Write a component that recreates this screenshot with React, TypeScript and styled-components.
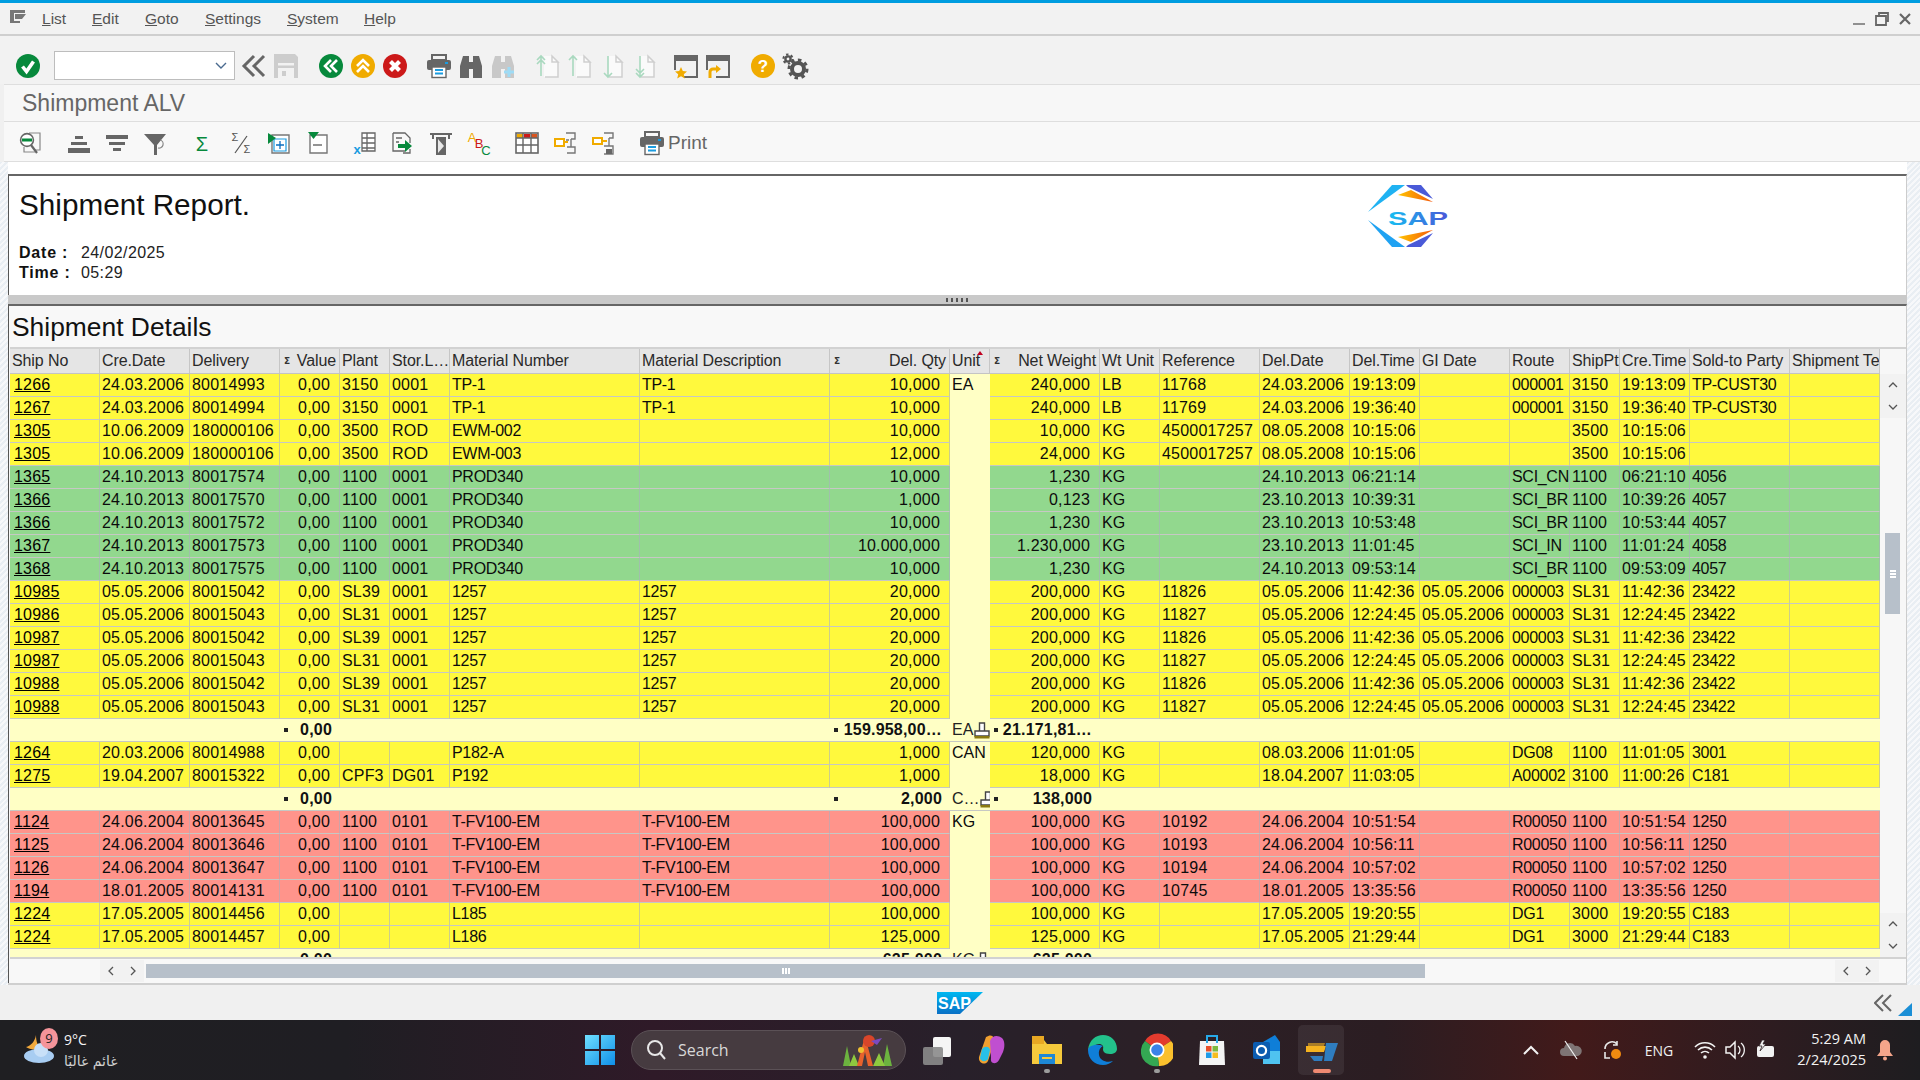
import React from 'react';
import styled, { createGlobalStyle } from 'styled-components';

const Global = createGlobalStyle`
  html, body { margin: 0; padding: 0; background: #f0f0f0; }
  * { box-sizing: border-box; }
  body { font-family: "Liberation Sans", Arial, sans-serif; overflow: hidden; }
`;

const Screen = styled.div`
  width: 1920px; height: 1080px; display: flex; flex-direction: column; overflow: hidden;
`;
const TopLine = styled.div`height: 3px; background: #009de0; flex: none;`;
const MenuBar = styled.div`
  height: 33px; flex: none; background: #f2f2f2; display: flex; align-items: center;
  border-bottom: 2px solid #cfcfcf; padding: 0 0 0 9px; color: #555; font-size: 15.5px;
`;
const MenuIcon = styled.svg`width: 18px; height: 18px; margin: -4px 15px 0 0; flex: none;`;
const MenuItem = styled.span<{ $w: number }>`
  width: ${p => p.$w}px; flex: none;
  &::first-letter { text-decoration: underline; }
`;
const WinControls = styled.div`margin-left: auto; display: flex; gap: 7px; padding-right: 7px; align-items: center;`;
const WinIcon = styled.svg`width: 16px; height: 16px; color: #666;`;

const SysBar = styled.div`
  height: 48px; flex: none; background: #f2f2f2; display: flex; align-items: center; padding: 12px 0 0 12px;
`;
const Tool = styled.span<{ $ml?: number; $w?: number }>`
  width: ${p => p.$w ?? 32}px; margin-left: ${p => p.$ml ?? 0}px; height: 24px; flex: none;
  display: flex; justify-content: center; align-items: center;
`;
const Ico = styled.svg`width: 24px; height: 24px; display: block; overflow: visible;`;
const Combo = styled.div`
  width: 181px; height: 29px; margin: -1px 3px 0 10px; background: #fff; border: 1px solid #bdbdbd; flex: none;
  display: flex; align-items: center; justify-content: flex-end; padding-right: 7px;
`;
const ComboArrow = styled.svg`width: 12px; height: 8px;`;
const TitleBar = styled.div`
  height: 38px; flex: none; margin-left: 4px; background: #f7f7f7; border-top: 1px solid #dedede; border-bottom: 1px solid #dedede;
  padding-left: 18px; color: #666; font-size: 23px; line-height: 36px;
`;
const AppBar = styled.div`
  height: 40px; flex: none; margin-left: 4px; background: #f8f8f8; border-bottom: 1px solid #dedede;
  display: flex; align-items: center; padding: 3px 0 0 8px;
`;
const PrintLabel = styled.span`font-size: 19px; color: #666; margin-left: 0;`;

const Middle = styled.div`flex: 1; display: flex; min-height: 0;`;
const Hatch = styled.div<{ $w: number }>`
  width: ${p => p.$w}px; flex: none;
  background: repeating-linear-gradient(135deg, #e9eef3 0 2px, #f7f8fa 2px 4px);
`;
const Main = styled.div`
  flex: 1; min-width: 0; background: #fff; padding-top: 12px; display: flex; flex-direction: column; border-bottom: 2px solid #cfcfcf;
`;
const Report = styled.div`
  height: 121px; flex: none; border-top: 2px solid #666; border-left: 1px solid #555; border-right: 1px solid #ccc;
  display: flex; background: #fff;
`;
const ReportText = styled.div`flex: 0 0 1359px; padding: 12px 0 0 10px;`;
const ReportTitle = styled.div`font-size: 29.7px; line-height: 34px; color: #111;`;
const InfoLine = styled.div`font-size: 16px; line-height: 20px; display: flex; color: #222; letter-spacing: .4px;`;
const InfoGap = styled.div`height: 21px;`;
const InfoKey = styled.b`width: 62px; color: #111; flex: none; letter-spacing: .8px;`;
const Logo = styled.svg`width: 80px; height: 62px; margin-top: 9px; flex: none;`;
const Splitter = styled.div`height: 9px; flex: none; background: #c9c9c9; display: flex; justify-content: center; align-items: center;`;
const SplitGrip = styled.div`width: 24px; height: 4px; background: repeating-linear-gradient(90deg, #555 0 2px, transparent 2px 5px);`;
const Details = styled.div`
  flex: 1; min-height: 0; display: flex; flex-direction: column; background: #f8f8f8;
  border-top: 2px solid #666; border-left: 1px solid #555; border-right: 1px solid #ccc;
`;
const DetailsTitle = styled.div`
  height: 43px; flex: none; padding-left: 2px; font-size: 26.4px; line-height: 43px; color: #111;
  border-bottom: 2px solid #d2d2d2; margin-left: 1px;
`;
const TableZone = styled.div`display: flex; height: 608px; flex: none; padding-left: 1px;`;
const TableWrap = styled.div`width: 1870px; flex: none; overflow: hidden; display: flex; flex-direction: column;`;

const GRID = '90px 90px 90px 60px 50px 60px 190px 190px 120px 40px 110px 60px 100px 90px 70px 90px 60px 50px 70px 100px 90px';

const HeadRow = styled.div`
  display: grid; grid-template-columns: ${GRID}; height: 25px; flex: none; background: #e5e5e5; border-bottom: 1px solid #c4c4c4;
`;
const HeadCell = styled.div<{ $right?: boolean }>`
  position: relative; font-size: 16px; line-height: 24px; color: #2a2a2a; white-space: nowrap; overflow: hidden;
  padding: 0 3px 0 2px; border-right: 1px solid #c6c6c6; letter-spacing: -.1px; ${p => p.$right ? 'text-align: right;' : ''}
`;
const SigmaMark = styled.span`position: absolute; left: 4px; top: 0; font: bold 9px/24px "DejaVu Sans", sans-serif; color: #333;`;
const SortMark = styled.span`
  position: absolute; left: 27px; top: 2px; width: 0; height: 0;
  border-left: 3px solid transparent; border-right: 3px solid transparent; border-bottom: 4px solid #c00020;
`;
const Body = styled.div`flex: 1; min-height: 0; overflow: hidden;`;
const ROW_BG: Record<string, string> = { y: '#fff93d', g: '#92d88e', r: '#ff948b', s: '#ffffc5' };
const DataRow = styled.div`display: grid; grid-template-columns: ${GRID}; height: 23px;`;
const Cell = styled.div<{ $kind: string; $right?: boolean; $tight?: boolean }>`
  background: ${p => ROW_BG[p.$kind]}; font-size: 16px; line-height: 22px; color: #0c0c0c; white-space: nowrap; overflow: hidden;
  border-right: 1px solid rgba(170, 175, 190, .6); border-bottom: 1px solid #c6c8c4;
  letter-spacing: ${p => p.$tight ? '-.3px' : '.2px'};
  padding: ${p => p.$right ? '0 9px 0 2px' : '0 1px 0 2px'}; ${p => p.$right ? 'text-align: right;' : ''}
`;
const UnitCell = styled.div`
  background: #ffffc5; font-size: 16px; line-height: 22px; color: #0c0c0c; padding-left: 2px; overflow: hidden; white-space: nowrap;
`;
const LinkText = styled.span`text-decoration: underline; color: #000; padding-left: 2px;`;
const SumCell = styled.div`
  background: #ffffc5; border-bottom: 1px solid #c6c8c4; border-top: 0; font-size: 16px; line-height: 22px; white-space: nowrap;
`;
const SumValue = styled(SumCell)`
  display: flex; justify-content: space-between; align-items: center; padding: 0 8px 0 4px; font-weight: bold; color: #111; letter-spacing: .2px;
`;
const SumDot = styled.i`width: 4px; height: 4px; background: #222; flex: none;`;
const SumUnit = styled(SumCell)`display: flex; align-items: center; justify-content: space-between; padding-left: 2px; color: #222; overflow: visible;`;
const SumIcon = styled.svg`width: 16px; height: 17px; flex: none; margin-right: 0;`;

const VScroll = styled.div`width: 26px; flex: none; display: flex; flex-direction: column; padding-top: 25px; background: #f7f7f7;`;
const ScrollBtn = styled.div<{ $w?: number; $ml?: number }>`
  width: ${p => p.$w ?? 26}px; height: 22px; margin-left: ${p => p.$ml ?? 0}px; flex: none; background: #f2f2f2;
  display: flex; align-items: center; justify-content: center;
`;
const Chevron = styled.svg`width: 10px; height: 10px; color: #555;`;
const VTrack = styled.div`flex: 1; padding: 115px 6px 0 5px;`;
const VThumb = styled.div`width: 15px; height: 81px; background: #b7c0ca; display: flex; align-items: center; justify-content: center;`;
const VGrip = styled.i`width: 6px; height: 8px; background: repeating-linear-gradient(0deg, #fff 0 2px, transparent 2px 3px);`;
const HBar = styled.div`
  height: 26px; flex: none; display: flex; align-items: center; padding-left: 90px; background: #f8f8f8; border-top: 2px solid #d2d2d2; margin-left: 1px;
`;
const HThumb = styled.div`width: 1279px; height: 14px; margin: 0 410px 0 2px; background: #b7c0ca; display: flex; align-items: center; justify-content: center; flex: none;`;
const HGrip = styled.i`width: 8px; height: 6px; background: repeating-linear-gradient(90deg, #fff 0 2px, transparent 2px 3px);`;

const StatusBar = styled.div`
  height: 35px; flex: none; background: #f0f0f0; display: grid; grid-template-columns: 1fr auto 1fr; align-items: center; position: relative;
`;
const SapMark = styled.svg`width: 46px; height: 22px; grid-column: 2;`;
const StatusRight = styled.div`display: flex; justify-content: flex-end; padding-right: 28px;`;
const CollapseIcon = styled.svg`width: 18px; height: 20px;`;
const Corner = styled.div`
  position: absolute; right: 8px; bottom: 4px; width: 0; height: 0;
  border-left: 14px solid transparent; border-bottom: 13px solid #1b8fd6;
`;

const Taskbar = styled.div`
  height: 60px; flex: none; display: flex; align-items: center; color: #fff;
  background: linear-gradient(90deg, #1f1f22 0%, #1f1e23 18%, #2f1a28 34%, #28202a 50%, #2c2026 62%, #2b1d22 72%, #421a1a 82%, #2e1c20 92%, #1e1d20 100%);
  font-family: "Open Sans", "Noto Sans", sans-serif;
`;
const Weather = styled.div`width: 585px; flex: none; display: flex; padding-left: 24px; align-items: center;`;
const WeatherIcon = styled.div`position: relative; width: 40px; height: 40px; flex: none;`;
const WeatherBadge = styled.span`
  position: absolute; left: 16px; top: -2px; width: 18px; height: 21px; border-radius: 50%; background: #f4949a; color: #222;
  font-size: 13px; line-height: 21px; text-align: center;
`;
const WeatherText = styled.div`display: flex; flex-direction: column; margin-left: 0;`;
const WeatherTemp = styled.span`font-size: 14px; line-height: 20px; color: #f4f4f4;`;
const WeatherDesc = styled.span`font: 14px/20px "DejaVu Sans", sans-serif; color: #d0d0d0; margin-top: 1px;`;
const StartSlot = styled.div`width: 30px; height: 30px; flex: none;`;
const SearchBox = styled.div`
  width: 275px; height: 40px; margin-left: 16px; flex: none; border-radius: 20px; background: #463b40; border: 1px solid #5b5156;
  display: flex; align-items: center; padding-left: 13px; color: #d8d8d8; font-size: 16px;
`;
const SearchIcon = styled.svg`width: 22px; height: 22px; margin-right: 11px; flex: none;`;
const SearchArt = styled.svg`width: 52px; height: 36px; margin-left: auto; margin-right: 12px; flex: none;`;
const AppSlot = styled.div<{ $ml?: number; $active?: boolean }>`
  position: relative; width: 55px; height: 50px; flex: none; margin-left: ${p => p.$ml ?? 0}px;
  display: flex; align-items: center; justify-content: center;
  &::before { content: ""; position: absolute; left: 4px; right: 5px; top: 0; bottom: 0; border-radius: 5px; background: ${p => p.$active ? 'rgba(255,255,255,.07)' : 'transparent'}; }
`;
const AppIcon = styled.svg`width: 32px; height: 34px; position: relative;`;
const RunDot = styled.i<{ $active?: boolean }>`
  position: absolute; bottom: 2px; left: 50%; transform: translateX(-50%); height: 4px; border-radius: 2px;
  width: ${p => p.$active ? 18 : 6}px; background: ${p => p.$active ? '#f08a72' : '#9c9c9c'};
`;
const TrayItem = styled.div<{ $ml: number; $w?: number }>`
  width: ${p => p.$w ?? 24}px; margin-left: ${p => p.$ml}px; flex: none; display: flex; justify-content: center; align-items: center; font-size: 14px; color: #f0f0f0;
`;
const TrayIcon = styled.svg`width: 22px; height: 22px;`;
const Clock = styled.div`
  width: 80px; margin: -2px 0 0 8px; flex: none; text-align: right; font-size: 14.5px; line-height: 21px; color: #f2f2f2;
`;

const I: React.FC<{ children: React.ReactNode }> = ({ children }) => <Ico viewBox="0 0 24 24">{children}</Ico>;

const binoPath = 'M1 12 L4 2h6v6h4V2h6l3 10v12h-9V15h-4v9H1z';
const pageShape = (
  <>
    <path d="M8 2h8l6 6v15H8z" fill="#fafafa" />
    <path d="M16 2l6 6h-6zM22 8v15H9" fill="none" stroke="#cfcfcf" strokeWidth="1.5" />
  </>
);
const Page: React.FC<{ up: boolean; dbl: boolean }> = ({ up, dbl }) => (
  <I>
    {pageShape}
    {up ? (
      <path d={`M5 22V2M1 6l4-4 4 4${dbl ? 'M1 10l4-4 4 4' : ''}`} fill="none" stroke="#a9d9bf" strokeWidth="1.6" />
    ) : (
      <path d={`M5 2V23M1 19l4 4 4-4${dbl ? 'M1 15l4 4 4-4' : ''}`} fill="none" stroke="#a9d9bf" strokeWidth="1.6" transform="translate(3 0)" />
    )}
  </I>
);
const Printer = () => (
  <I>
    <path d="M5 1h14v5H5z" fill="none" stroke="#666" strokeWidth="2" />
    <rect x="0" y="6" width="24" height="10" rx="2" fill="#666" />
    <rect x="18" y="8" width="3" height="2" fill="#1b9ce0" />
    <rect x="5" y="13" width="14" height="10.5" fill="#fff" stroke="#666" strokeWidth="1.4" />
    <path d="M8 16h8M8 19.5h8" stroke="#1b9ce0" strokeWidth="2" />
  </I>
);
const Gear = () => (
  <I>
    <circle cx="15" cy="15" r="6" fill="none" stroke="#555" strokeWidth="4" />
    <circle cx="15" cy="15" r="9" fill="none" stroke="#555" strokeWidth="3" strokeDasharray="3.5 3.5" />
    <circle cx="5" cy="5" r="2.6" fill="none" stroke="#555" strokeWidth="2.4" />
    <circle cx="5" cy="5" r="4.6" fill="none" stroke="#555" strokeWidth="2" strokeDasharray="2.4 2.4" />
  </I>
);
const Dc: React.FC<{ c: string; d: string; w?: number }> = ({ c, d, w }) => (
  <path d={d} fill="none" stroke={c} strokeWidth={w ?? 2.6} />
);

const COLS: { t: string; r?: boolean; s?: boolean; u?: boolean; tight?: boolean }[] = [
  { t: 'Ship No' }, { t: 'Cre.Date' }, { t: 'Delivery' }, { t: 'Value', r: true, s: true }, { t: 'Plant' }, { t: 'Stor.L…' },
  { t: 'Material Number', tight: true }, { t: 'Material Description', tight: true }, { t: 'Del. Qty', r: true, s: true }, { t: 'Unit', u: true },
  { t: 'Net Weight', r: true, s: true }, { t: 'Wt Unit' }, { t: 'Reference' }, { t: 'Del.Date' }, { t: 'Del.Time' }, { t: 'GI Date' },
  { t: 'Route', tight: true }, { t: 'ShipPt' }, { t: 'Cre.Time' }, { t: 'Sold-to Party', tight: true }, { t: 'Shipment Text' },
];

type R = { k: string; v: string } | { k: 'sum'; val: string; qty: string; unit: string; net: string };

const RAW: R[] = [
  { k: 'y', v: '1266|24.03.2006|80014993|0,00|3150|0001|TP-1|TP-1|10,000|EA|240,000|LB|11768|24.03.2006|19:13:09||000001|3150|19:13:09|TP-CUST30|' },
  { k: 'y', v: '1267|24.03.2006|80014994|0,00|3150|0001|TP-1|TP-1|10,000||240,000|LB|11769|24.03.2006|19:36:40||000001|3150|19:36:40|TP-CUST30|' },
  { k: 'y', v: '1305|10.06.2009|180000106|0,00|3500|ROD|EWM-002||10,000||10,000|KG|4500017257|08.05.2008|10:15:06|||3500|10:15:06||' },
  { k: 'y', v: '1305|10.06.2009|180000106|0,00|3500|ROD|EWM-003||12,000||24,000|KG|4500017257|08.05.2008|10:15:06|||3500|10:15:06||' },
  { k: 'g', v: '1365|24.10.2013|80017574|0,00|1100|0001|PROD340||10,000||1,230|KG||24.10.2013|06:21:14||SCI_CN|1100|06:21:10|4056|' },
  { k: 'g', v: '1366|24.10.2013|80017570|0,00|1100|0001|PROD340||1,000||0,123|KG||23.10.2013|10:39:31||SCI_BR|1100|10:39:26|4057|' },
  { k: 'g', v: '1366|24.10.2013|80017572|0,00|1100|0001|PROD340||10,000||1,230|KG||23.10.2013|10:53:48||SCI_BR|1100|10:53:44|4057|' },
  { k: 'g', v: '1367|24.10.2013|80017573|0,00|1100|0001|PROD340||10.000,000||1.230,000|KG||23.10.2013|11:01:45||SCI_IN|1100|11:01:24|4058|' },
  { k: 'g', v: '1368|24.10.2013|80017575|0,00|1100|0001|PROD340||10,000||1,230|KG||24.10.2013|09:53:14||SCI_BR|1100|09:53:09|4057|' },
  { k: 'y', v: '10985|05.05.2006|80015042|0,00|SL39|0001|1257|1257|20,000||200,000|KG|11826|05.05.2006|11:42:36|05.05.2006|000003|SL31|11:42:36|23422|' },
  { k: 'y', v: '10986|05.05.2006|80015043|0,00|SL31|0001|1257|1257|20,000||200,000|KG|11827|05.05.2006|12:24:45|05.05.2006|000003|SL31|12:24:45|23422|' },
  { k: 'y', v: '10987|05.05.2006|80015042|0,00|SL39|0001|1257|1257|20,000||200,000|KG|11826|05.05.2006|11:42:36|05.05.2006|000003|SL31|11:42:36|23422|' },
  { k: 'y', v: '10987|05.05.2006|80015043|0,00|SL31|0001|1257|1257|20,000||200,000|KG|11827|05.05.2006|12:24:45|05.05.2006|000003|SL31|12:24:45|23422|' },
  { k: 'y', v: '10988|05.05.2006|80015042|0,00|SL39|0001|1257|1257|20,000||200,000|KG|11826|05.05.2006|11:42:36|05.05.2006|000003|SL31|11:42:36|23422|' },
  { k: 'y', v: '10988|05.05.2006|80015043|0,00|SL31|0001|1257|1257|20,000||200,000|KG|11827|05.05.2006|12:24:45|05.05.2006|000003|SL31|12:24:45|23422|' },
  { k: 'sum', val: '0,00', qty: '159.958,00…', unit: 'EA', net: '21.171,81…' },
  { k: 'y', v: '1264|20.03.2006|80014988|0,00|||P182-A||1,000|CAN|120,000|KG||08.03.2006|11:01:05||DG08|1100|11:01:05|3001|' },
  { k: 'y', v: '1275|19.04.2007|80015322|0,00|CPF3|DG01|P192||1,000||18,000|KG||18.04.2007|11:03:05||A00002|3100|11:00:26|C181|' },
  { k: 'sum', val: '0,00', qty: '2,000', unit: 'C…', net: '138,000' },
  { k: 'r', v: '1124|24.06.2004|80013645|0,00|1100|0101|T-FV100-EM|T-FV100-EM|100,000|KG|100,000|KG|10192|24.06.2004|10:51:54||R00050|1100|10:51:54|1250|' },
  { k: 'r', v: '1125|24.06.2004|80013646|0,00|1100|0101|T-FV100-EM|T-FV100-EM|100,000||100,000|KG|10193|24.06.2004|10:56:11||R00050|1100|10:56:11|1250|' },
  { k: 'r', v: '1126|24.06.2004|80013647|0,00|1100|0101|T-FV100-EM|T-FV100-EM|100,000||100,000|KG|10194|24.06.2004|10:57:02||R00050|1100|10:57:02|1250|' },
  { k: 'r', v: '1194|18.01.2005|80014131|0,00|1100|0101|T-FV100-EM|T-FV100-EM|100,000||100,000|KG|10745|18.01.2005|13:35:56||R00050|1100|13:35:56|1250|' },
  { k: 'y', v: '1224|17.05.2005|80014456|0,00|||L185||100,000||100,000|KG||17.05.2005|19:20:55||DG1|3000|19:20:55|C183|' },
  { k: 'y', v: '1224|17.05.2005|80014457|0,00|||L186||125,000||125,000|KG||17.05.2005|21:29:44||DG1|3000|21:29:44|C183|' },
  { k: 'sum', val: '0,00', qty: '625,000', unit: 'KG', net: '625,000' },
];

const SumGlyph = () => (
  <SumIcon viewBox="0 0 16 17">
    <path d="M5.5 1h5v8h-5z M1 9h14v5H1z" fill="#fff" stroke="#444" strokeWidth="1.4" />
    <rect x="0.5" y="14" width="15" height="2.5" fill="#8a7a10" />
  </SumIcon>
);

const TableRow: React.FC<{ r: R }> = ({ r }) => {
  if (r.k === 'sum') {
    const s = r as { val: string; qty: string; unit: string; net: string };
    const cells: React.ReactNode[] = [];
    COLS.forEach((_, i) => {
      if (i === 3) cells.push(<SumValue key={i}><SumDot />{s.val}</SumValue>);
      else if (i === 8) cells.push(<SumValue key={i}><SumDot />{s.qty}</SumValue>);
      else if (i === 9) cells.push(<SumUnit key={i}>{s.unit}<SumGlyph /></SumUnit>);
      else if (i === 10) cells.push(<SumValue key={i}><SumDot />{s.net}</SumValue>);
      else cells.push(<SumCell key={i} />);
    });
    return <DataRow>{cells}</DataRow>;
  }
  const d = (r as { k: string; v: string });
  const vals = d.v.split('|');
  return (
    <DataRow>
      {COLS.map((c, i) => {
        if (c.u) return <UnitCell key={i}>{vals[i]}</UnitCell>;
        return (
          <Cell key={i} $kind={d.k} $right={c.r} $tight={c.tight}>
            {i === 0 ? <LinkText>{vals[i]}</LinkText> : vals[i]}
          </Cell>
        );
      })}
    </DataRow>
  );
};

const ChevUp = () => <Chevron viewBox="0 0 10 10"><path d="M1 7l4-4 4 4" fill="none" stroke="currentColor" strokeWidth="1.3" /></Chevron>;
const ChevDown = () => <Chevron viewBox="0 0 10 10"><path d="M1 3l4 4 4-4" fill="none" stroke="currentColor" strokeWidth="1.3" /></Chevron>;
const ChevLeft = () => <Chevron viewBox="0 0 10 10"><path d="M7 1L3 5l4 4" fill="none" stroke="currentColor" strokeWidth="1.3" /></Chevron>;
const ChevRight = () => <Chevron viewBox="0 0 10 10"><path d="M3 1l4 4-4 4" fill="none" stroke="currentColor" strokeWidth="1.3" /></Chevron>;

export default function App() {
  return (
    <Screen>
      <Global />
      <TopLine />
      <MenuBar>
        <MenuIcon viewBox="0 0 18 18">
          <path d="M1 2h15v3H5v8h6v2H1z M6 6h11l-4 5H6z" fill="#777" />
        </MenuIcon>
        <MenuItem $w={50}>List</MenuItem>
        <MenuItem $w={53}>Edit</MenuItem>
        <MenuItem $w={60}>Goto</MenuItem>
        <MenuItem $w={82}>Settings</MenuItem>
        <MenuItem $w={77}>System</MenuItem>
        <MenuItem $w={40}>Help</MenuItem>
        <WinControls>
          <WinIcon viewBox="0 0 16 16"><path d="M2 13h12" stroke="currentColor" strokeWidth="1.4" /></WinIcon>
          <WinIcon viewBox="0 0 16 16"><path d="M2 5h10v9H2z M5 5V2h9v8h-2" fill="none" stroke="currentColor" strokeWidth="1.8" /></WinIcon>
          <WinIcon viewBox="0 0 16 16"><path d="M3 3l10 10M13 3L3 13" stroke="currentColor" strokeWidth="2.2" /></WinIcon>
        </WinControls>
      </MenuBar>

      <SysBar>
        <Tool><I><circle cx="12" cy="12" r="12" fill="#07893c" /><Dc c="#fff" w={3.6} d="M6.5 12.5l4 5 7-10" /></I></Tool>
        <Combo><ComboArrow viewBox="0 0 12 8"><path d="M1 1l5 5 5-5" fill="none" stroke="#4a6a8f" strokeWidth="1.4" /></ComboArrow></Combo>
        <Tool><I><Dc c="#666" w={3} d="M12 2L2 12l10 10M22 2L12 12l10 10" /></I></Tool>
        <Tool>
          <I>
            <path d="M0 0h21l3 3v21H0z" fill="#cdcdcd" />
            <rect x="4" y="9" width="16" height="2.5" fill="#f2f2f2" />
            <rect x="4" y="14" width="16" height="10" fill="#f2f2f2" />
            <rect x="8" y="17" width="4" height="5" fill="#cdcdcd" />
          </I>
        </Tool>
        <Tool $ml={13}><I><circle cx="12" cy="12" r="12" fill="#07893c" /><Dc c="#fff" d="M12 6l-6 6 6 6M18 6l-6 6 6 6" /></I></Tool>
        <Tool><I><circle cx="12" cy="12" r="12" fill="#f0ab00" /><Dc c="#fff" d="M6 12l6-6 6 6M6 18l6-6 6 6" /></I></Tool>
        <Tool><I><circle cx="12" cy="12" r="12" fill="#cc1919" /><Dc c="#fff" w={4.2} d="M7.5 7.5l9 9M16.5 7.5l-9 9" /></I></Tool>
        <Tool $ml={12}><Printer /></Tool>
        <Tool><I><path d={binoPath} fill="#666" /></I></Tool>
        <Tool>
          <I>
            <path d={binoPath} fill="#c8c8c8" />
            <path d="M18 13v10M13 18h10" stroke="#9edbf5" strokeWidth="3" />
          </I>
        </Tool>
        <Tool $ml={13}><Page up dbl /></Tool>
        <Tool><Page up dbl={false} /></Tool>
        <Tool><Page up={false} dbl={false} /></Tool>
        <Tool><Page up={false} dbl /></Tool>
        <Tool $ml={10}>
          <I>
            <path d="M0 1h24v6H0z M22 7h2v17H10v-2h12z M0 7h2v9H0z" fill="#666" />
            <path d="M7 13l1.8 4 4.2.4-3.2 2.8 1 4.3L7 22.2 3.2 24.5l1-4.3L1 17.4l4.2-.4z" fill="#f0ab00" />
          </I>
        </Tool>
        <Tool>
          <I>
            <path d="M0 1h24v6H0z M22 7h2v17H10v-2h12z M0 7h2v9H0z" fill="#666" />
            <path d="M4 24v-6a3 3 0 0 1 3-3h4" fill="none" stroke="#f0ab00" strokeWidth="3" />
            <path d="M10 11l5 4-5 4z" fill="#f0ab00" />
          </I>
        </Tool>
        <Tool $ml={13}>
          <I>
            <circle cx="12" cy="12" r="12" fill="#f0ab00" />
            <text x="12" y="18" fontFamily="Liberation Sans" fontWeight="bold" fontSize="17" fill="#fff" textAnchor="middle">?</text>
          </I>
        </Tool>
        <Tool><Gear /></Tool>
      </SysBar>

      <TitleBar>Shimpment ALV</TitleBar>

      <AppBar>
        <Tool $w={38}>
          <I>
            <path d="M10 2h11v17h-6M5 16v5h11" fill="none" stroke="#888" strokeWidth="1.2" />
            <circle cx="8" cy="9" r="6.4" fill="#fff" stroke="#666" strokeWidth="1.6" />
            <rect x="3" y="7.5" width="10" height="3" fill="#07893c" />
            <path d="M12 14l6 8" stroke="#666" strokeWidth="2.2" />
          </I>
        </Tool>
        <Tool $w={38} $ml={10}><I><path d="M8 5h8v3H8z M4 11h16v3H4z M1 17h22v5H1z" fill="#666" /></I></Tool>
        <Tool $w={38}><I><path d="M1 4h22v4H1z M4 11h16v3H4z M8 17h8v3H8z" fill="#666" /></I></Tool>
        <Tool $w={38}>
          <I>
            <path d="M1 3h22l-9 11v10h-3V14z" fill="#666" />
            <path d="M17 9a4 4 0 0 1-2 8" fill="none" stroke="#888" strokeWidth="1.2" />
          </I>
        </Tool>
        <Tool $w={38} $ml={9}>
          <I><text x="12" y="20" fontFamily="Liberation Sans" fontSize="20" fill="#07893c" textAnchor="middle">Σ</text></I>
        </Tool>
        <Tool $w={38} $ml={1}>
          <I>
            <text x="6" y="10" fontFamily="Liberation Sans" fontSize="11" fill="#555" textAnchor="middle">Σ</text>
            <text x="18" y="22" fontFamily="Liberation Sans" fontSize="11" fill="#555" textAnchor="middle">Σ</text>
            <path d="M6 22L18 5" stroke="#555" strokeWidth="1.2" />
          </I>
        </Tool>
        <Tool $w={38}>
          <I>
            <path d="M5 4h17v18H5z" fill="#fff" stroke="#777" strokeWidth="1.4" />
            <path d="M7 8h12v12H7z" fill="none" stroke="#1b9ce0" strokeWidth="1.2" />
            <path d="M13 10v8M9 14h8" stroke="#0a6ec0" strokeWidth="1.3" />
            <path d="M1 2l8 5-8 6z" fill="#07893c" />
          </I>
        </Tool>
        <Tool $w={38}>
          <I>
            <path d="M5 4h17v18H5z" fill="#fff" stroke="#777" strokeWidth="1.4" />
            <path d="M8 14h9" stroke="#666" strokeWidth="1.4" />
            <path d="M3 1h11l-5.5 7z" fill="#07893c" />
          </I>
        </Tool>
        <Tool $w={38} $ml={10}>
          <I>
            <path d="M9 2h13v18H9z M9 7h13M9 12h13M9 17h13M14 2v18" fill="#fff" stroke="#666" strokeWidth="1.3" />
            <text x="4" y="23" fontFamily="Liberation Sans" fontWeight="bold" fontSize="13" fill="#1b9ce0" textAnchor="middle">x</text>
          </I>
        </Tool>
        <Tool $w={38}>
          <I>
            <path d="M2 2h12l5 5v5M2 2v18h12M19 18v4h-7" fill="none" stroke="#666" strokeWidth="1.3" />
            <path d="M5 7h6M5 11h3" stroke="#666" strokeWidth="1.3" />
            <path d="M7 13h7v-4l7 6-7 6v-4H7z" fill="#07893c" />
          </I>
        </Tool>
        <Tool $w={38}>
          <I>
            <path d="M1 2h22v2H1z M3 4h2v4H3z M19 4h2v4h-2z" fill="#666" />
            <path d="M7 6h10v18H7z" fill="#666" />
            <path d="M9 8l6 7-6 7z" fill="#e8e8e8" />
          </I>
        </Tool>
        <Tool $w={38}>
          <I>
            <text x="5" y="11" fontFamily="Liberation Sans" fontSize="13" fill="#f0ab00" textAnchor="middle">A</text>
            <text x="12" y="17" fontFamily="Liberation Sans" fontSize="13" fill="#cc1919" textAnchor="middle">B</text>
            <text x="19" y="24" fontFamily="Liberation Sans" fontSize="13" fill="#07893c" textAnchor="middle">C</text>
          </I>
        </Tool>
        <Tool $w={38} $ml={10}>
          <I>
            <rect x="1" y="2" width="22" height="20" fill="#fff" stroke="#666" strokeWidth="1.6" />
            <rect x="2" y="3" width="6" height="4" fill="#f0ab00" />
            <rect x="9" y="3" width="6" height="4" fill="#cc1919" />
            <rect x="16" y="3" width="6" height="4" fill="#d9541e" />
            <path d="M1 7h22M1 14h22M8 2v20M16 2v20" stroke="#666" strokeWidth="1.4" />
          </I>
        </Tool>
        <Tool $w={38}>
          <I>
            <path d="M13 2h9v6h-4M18 8v8M14 16h8v6h-8M13 9h3" fill="none" stroke="#777" strokeWidth="1.4" />
            <rect x="2" y="8" width="9" height="7" fill="#fff" stroke="#f0ab00" strokeWidth="2" />
            <path d="M11 11h4" stroke="#f0ab00" strokeWidth="2" />
          </I>
        </Tool>
        <Tool $w={38}>
          <I>
            <path d="M13 2h9v5h-4M18 7v8M13 15h9v8h-9" fill="none" stroke="#777" strokeWidth="1.4" />
            <rect x="15" y="18" width="6" height="5" fill="#666" />
            <rect x="2" y="7" width="9" height="6" fill="#fff" stroke="#f0ab00" strokeWidth="2" />
            <path d="M11 10h5" stroke="#f0ab00" strokeWidth="2" />
          </I>
        </Tool>
        <Tool $ml={14}><Printer /></Tool>
        <PrintLabel>Print</PrintLabel>
      </AppBar>

      <Middle>
        <Hatch $w={8} />
        <Main>
          <Report>
            <ReportText>
              <ReportTitle>Shipment Report.</ReportTitle>
              <InfoGap />
              <InfoLine><InfoKey>Date :</InfoKey>24/02/2025</InfoLine>
              <InfoLine><InfoKey>Time :</InfoKey>05:29</InfoLine>
            </ReportText>
            <Logo viewBox="0 0 80 62">
              <defs>
                <linearGradient id="lgB" x1="0" x2="1" y1="0" y2="0">
                  <stop offset="0" stopColor="#15c0f2" />
                  <stop offset="1" stopColor="#4a55d8" />
                </linearGradient>
                <linearGradient id="lgO" x1="0" x2="1" y1="0" y2="0">
                  <stop offset="0" stopColor="#ffc400" />
                  <stop offset="1" stopColor="#f4580a" />
                </linearGradient>
              </defs>
              <polygon points="0,27 24,0 37,0" fill="#1fb2f2" />
              <polygon points="38,0 53,0 65,14 40,2" fill="#4a5ad8" />
              <polygon points="30,10 43,5 65,17" fill="url(#lgO)" />
              <polygon points="0,35 24,62 37,62" fill="#1fa2f2" />
              <polygon points="38,62 53,62 65,48 40,60" fill="#4a5ad8" />
              <polygon points="30,52 43,57 65,45" fill="url(#lgO)" />
              <text x="20" y="40" fontFamily="Liberation Sans" fontWeight="bold" fontSize="19" fill="url(#lgB)" textLength="60" lengthAdjust="spacingAndGlyphs">SAP</text>
            </Logo>
          </Report>
          <Splitter><SplitGrip /></Splitter>
          <Details>
            <DetailsTitle>Shipment Details</DetailsTitle>
            <TableZone>
              <TableWrap>
                <HeadRow>
                  {COLS.map((c, i) => (
                    <HeadCell key={i} $right={c.r}>
                      {c.s && <SigmaMark>Σ</SigmaMark>}
                      {c.u && <SortMark />}
                      {c.t}
                    </HeadCell>
                  ))}
                </HeadRow>
                <Body>
                  {RAW.map((r, i) => <TableRow key={i} r={r} />)}
                </Body>
              </TableWrap>
              <VScroll>
                <ScrollBtn><ChevUp /></ScrollBtn>
                <ScrollBtn><ChevDown /></ScrollBtn>
                <VTrack><VThumb><VGrip /></VThumb></VTrack>
                <ScrollBtn><ChevUp /></ScrollBtn>
                <ScrollBtn><ChevDown /></ScrollBtn>
              </VScroll>
            </TableZone>
            <HBar>
              <ScrollBtn $w={22}><ChevLeft /></ScrollBtn>
              <ScrollBtn $w={22}><ChevRight /></ScrollBtn>
              <HThumb><HGrip /></HThumb>
              <ScrollBtn $w={22}><ChevLeft /></ScrollBtn>
              <ScrollBtn $w={22}><ChevRight /></ScrollBtn>
            </HBar>
          </Details>
        </Main>
        <Hatch $w={13} />
      </Middle>

      <StatusBar>
        <SapMark viewBox="0 0 46 22">
          <defs>
            <linearGradient id="sapG" x1="0" x2="0" y1="0" y2="1">
              <stop offset="0" stopColor="#00b8f1" />
              <stop offset="1" stopColor="#0a70c5" />
            </linearGradient>
          </defs>
          <polygon points="0,0 46,0 23,22 0,22" fill="url(#sapG)" />
          <text x="1" y="17" fontFamily="Liberation Sans" fontWeight="bold" fontSize="17" fill="#fff" textLength="33" lengthAdjust="spacingAndGlyphs">SAP</text>
        </SapMark>
        <StatusRight>
          <CollapseIcon viewBox="0 0 18 20">
            <path d="M9 2L1 10l8 8M17 2l-8 8 8 8" fill="none" stroke="#666" strokeWidth="2" />
          </CollapseIcon>
        </StatusRight>
        <Corner />
      </StatusBar>

      <Taskbar>
        <Weather>
          <WeatherIcon>
            <svg viewBox="0 0 40 40" width="40" height="40">
              <path d="M12 5c0 7 2 11 5 13-5 2-11 2-15-1 5-1 9-6 10-12z" fill="#f2a93b" />
              <ellipse cx="15" cy="26" rx="15" ry="7" fill="#a8cdf2" />
              <circle cx="17" cy="20" r="7" fill="#c8e0f8" />
            </svg>
            <WeatherBadge>9</WeatherBadge>
          </WeatherIcon>
          <WeatherText>
            <WeatherTemp>9°C</WeatherTemp>
            <WeatherDesc>غائم غالبًا</WeatherDesc>
          </WeatherText>
        </Weather>
        <StartSlot>
          <svg viewBox="0 0 30 30" width="30" height="30">
            <defs>
              <linearGradient id="winG" x1="0" x2="1" y1="0" y2="1">
                <stop offset="0" stopColor="#6fe0ff" />
                <stop offset="1" stopColor="#0f8fe8" />
              </linearGradient>
            </defs>
            <path d="M0 0h14v14H0zM16 0h14v14H16zM0 16h14v14H0zM16 16h14v14H16z" fill="url(#winG)" />
          </svg>
        </StartSlot>
        <SearchBox>
          <SearchIcon viewBox="0 0 22 22">
            <circle cx="10" cy="9" r="7" fill="none" stroke="#e8e8e8" strokeWidth="2" />
            <path d="M15 14l5 6" stroke="#e8e8e8" strokeWidth="2" />
          </SearchIcon>
          Search
          <SearchArt viewBox="0 0 52 36">
            <path d="M2 34l4-20 4 20zM42 34l4-22 5 22z" fill="#6cb33f" />
            <path d="M8 34l5-12 5 12zM32 34l6-13 6 13z" fill="#8fc93f" />
            <path d="M16 34L24 4l8 30h-5l-3-14-3 14z" fill="#e8622c" />
            <circle cx="28" cy="9" r="6" fill="#d9452a" />
            <path d="M30 9l11-3-5 7z" fill="#7a4ac0" />
            <circle cx="20" cy="18" r="3" fill="#f0c030" />
          </SearchArt>
        </SearchBox>
        <AppSlot $ml={3}>
          <AppIcon viewBox="0 0 32 34">
            <rect x="12" y="4" width="18" height="20" rx="2" fill="#f5f5f5" />
            <rect x="2" y="14" width="20" height="18" rx="2" fill="#8b8b8b" opacity=".9" />
          </AppIcon>
        </AppSlot>
        <AppSlot>
          <AppIcon viewBox="0 0 32 34">
            <path d="M10 4c6-4 9 0 8 6l-6 18c-3 5-10 2-9-4z" fill="#f0a030" />
            <path d="M14 8c2-6 8-6 12-3 3 3 3 9 1 14l-4 8c-3 5-9 4-8-2z" fill="#c04fd0" />
            <path d="M6 16c3-3 7-3 8 1l-2 9c-2 3-7 3-8-1z" fill="#27c0e8" />
          </AppIcon>
        </AppSlot>
        <AppSlot>
          <AppIcon viewBox="0 0 32 34">
            <path d="M1 7h12l3 4h15v20H1z" fill="#f5c93c" />
            <path d="M1 3h12v8H1z" fill="#e8a823" />
            <rect x="8" y="21" width="16" height="10" fill="#1e88d6" />
            <rect x="11" y="24" width="10" height="2" fill="#f5c93c" />
          </AppIcon>
          <RunDot />
        </AppSlot>
        <AppSlot>
          <AppIcon viewBox="0 0 32 34">
            <path d="M2 17C3 7 10 2 17 2c8 0 14 6 14 14 0 3-3 5-7 5-6 0-7-3-7-5 2-6-8-7-10-1z" fill="#23c18b" />
            <path d="M2 17c0 9 7 15 15 15 4 0 8-2 10-4-6 2-13 0-14-6-1-7 4-9 4-9-7-3-15 0-15 4z" fill="#0f7ed8" />
          </AppIcon>
        </AppSlot>
        <AppSlot>
          <AppIcon viewBox="0 0 32 34">
            <path d="M16 17L4 8a15 15 0 0 1 26 0z" fill="#e33b2e" />
            <path d="M16 17l14-9a15 15 0 0 1-12 25z" fill="#fbc02d" />
            <path d="M16 17L18 33A15 15 0 0 1 4 8z" fill="#34a853" />
            <circle cx="16" cy="17" r="7.5" fill="#fff" />
            <circle cx="16" cy="17" r="5.8" fill="#3b82e8" />
          </AppIcon>
          <RunDot />
        </AppSlot>
        <AppSlot>
          <AppIcon viewBox="0 0 32 34">
            <path d="M4 8h24l1 24H3z" fill="#f4f4f4" />
            <path d="M11 10V3h10v7" fill="none" stroke="#27a9e8" strokeWidth="2" />
            <rect x="10" y="13" width="5.5" height="5.5" fill="#e8502a" />
            <rect x="16.5" y="13" width="5.5" height="5.5" fill="#7db93f" />
            <rect x="10" y="19.5" width="5.5" height="5.5" fill="#1e9be8" />
            <rect x="16.5" y="19.5" width="5.5" height="5.5" fill="#f5bc1e" />
          </AppIcon>
        </AppSlot>
        <AppSlot>
          <AppIcon viewBox="0 0 32 34">
            <path d="M12 9L24 2l5 7v22H12z" fill="#0f7ed8" />
            <path d="M12 18h17v13H12z" fill="#4fc3f0" />
            <rect x="2" y="9" width="17" height="17" rx="2" fill="#0b5cb0" />
            <circle cx="10.5" cy="17.5" r="4.6" fill="none" stroke="#fff" strokeWidth="2.2" />
          </AppIcon>
        </AppSlot>
        <AppSlot $active>
          <AppIcon viewBox="0 0 32 34">
            <path d="M0 13h20l-2 6H0z" fill="#f5b320" />
            <path d="M4 23h13l-1 5H8z" fill="#2f7dc0" />
            <path d="M20 10h12l-6 18h-8z" fill="#2f7dc0" />
            <path d="M2 10h17l-1 3H2z" fill="#f5b320" opacity=".6" />
          </AppIcon>
          <RunDot $active />
        </AppSlot>
        <TrayItem $ml={170}>
          <TrayIcon viewBox="0 0 22 22"><path d="M4 15l7-7 7 7" fill="none" stroke="#f2f2f2" strokeWidth="2" /></TrayIcon>
        </TrayItem>
        <TrayItem $ml={16}>
          <TrayIcon viewBox="0 0 22 22">
            <path d="M4 17a4 4 0 0 1 0-8 6 6 0 0 1 11-2 5 5 0 0 1 3 10z" fill="#7e7474" />
            <path d="M5 2l12 18" stroke="#f2f2f2" strokeWidth="1.2" />
          </TrayIcon>
        </TrayItem>
        <TrayItem $ml={17}>
          <TrayIcon viewBox="0 0 22 22">
            <path d="M4 10a7 7 0 0 1 12-5M16 2v4h-4M4 13v6h5" fill="none" stroke="#e8e8e8" strokeWidth="1.6" />
            <circle cx="15" cy="15" r="5" fill="#f08a10" />
          </TrayIcon>
        </TrayItem>
        <TrayItem $ml={17} $w={36}>ENG</TrayItem>
        <TrayItem $ml={16}>
          <TrayIcon viewBox="0 0 22 22">
            <path d="M1 8a14 14 0 0 1 20 0M4 11a10 10 0 0 1 14 0M7 14a6 6 0 0 1 8 0" fill="none" stroke="#f2f2f2" strokeWidth="1.6" />
            <circle cx="11" cy="18" r="1.8" fill="#f2f2f2" />
          </TrayIcon>
        </TrayItem>
        <TrayItem $ml={6}>
          <TrayIcon viewBox="0 0 22 22">
            <path d="M2 8h4l5-5v16l-5-5H2z" fill="none" stroke="#f2f2f2" strokeWidth="1.5" />
            <path d="M14 7a5 5 0 0 1 0 8M17 4a9 9 0 0 1 0 14" fill="none" stroke="#f2f2f2" strokeWidth="1.3" />
          </TrayIcon>
        </TrayItem>
        <TrayItem $ml={7}>
          <TrayIcon viewBox="0 0 22 22">
            <rect x="2" y="7" width="17" height="11" rx="2" fill="#f2f2f2" />
            <path d="M7 1l-3 6h3l-2 5 6-7H8l2-4z" fill="#f2f2f2" stroke="#2a1c20" strokeWidth=".8" />
          </TrayIcon>
        </TrayItem>
        <Clock>5:29 AM<br />2/24/2025</Clock>
        <TrayItem $ml={7}>
          <TrayIcon viewBox="0 0 22 22">
            <path d="M11 1a5 5 0 0 1 5 5v7l3 4H3l3-4V6a5 5 0 0 1 5-5z" fill="#f4a58a" />
            <circle cx="11" cy="19.5" r="2" fill="#f4a58a" />
          </TrayIcon>
        </TrayItem>
      </Taskbar>
    </Screen>
  );
}
